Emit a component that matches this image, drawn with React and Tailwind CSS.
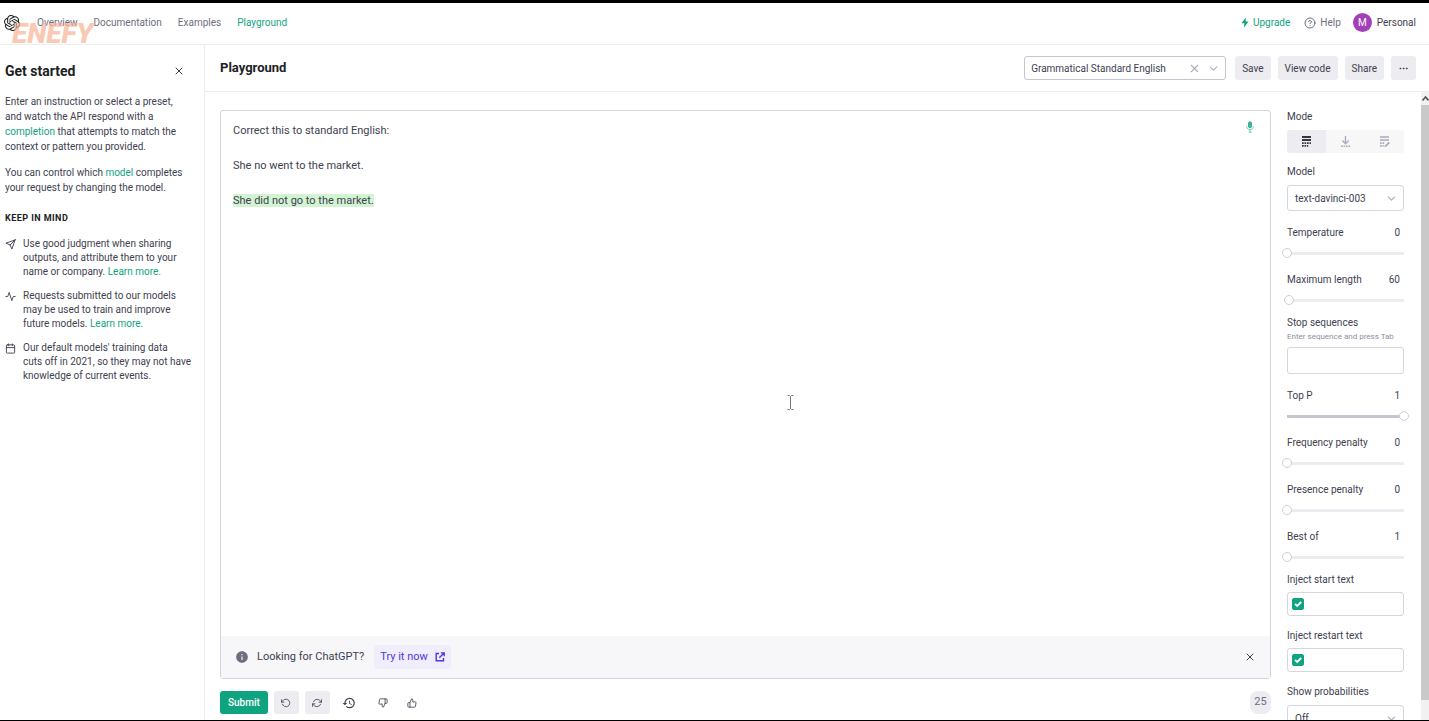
import React, { useState } from "react";
import { SiOpenai } from "react-icons/si";
import {
  FiSend, FiActivity, FiCalendar, FiX, FiChevronDown, FiHelpCircle,
  FiRotateCcw, FiRefreshCw, FiThumbsDown, FiThumbsUp, FiMoreHorizontal,
} from "react-icons/fi";
import { MdHistory, MdInfo } from "react-icons/md";

const NAV = ["Overview", "Documentation", "Examples", "Playground"];

const TIPS = [
  { icon: FiSend, text: "Use good judgment when sharing\noutputs, and attribute them to your\nname or company. ", link: true },
  { icon: FiActivity, text: "Requests submitted to our models\nmay be used to train and improve\nfuture models. ", link: true },
  { icon: FiCalendar, text: "Our default models' training data\ncuts off in 2021, so they may not have\nknowledge of current events.", link: false },
];

function CompleteIcon() {
  return (
    <svg width="13" height="13" viewBox="0 0 13 13" fill="currentColor" aria-hidden="true">
      <path d="M2 1h9v2H2zM2 4h9v2H2z" />
      <path d="M2 7.300h1.700v1.700H2zM4.500 7.300h1.700v1.700H4.500zM7 7.300h1.700v1.700H7zM9.500 7.300H11v1.700H9.500zM2 10h1.700v1.700H2zM4.500 10h1.700v1.700H4.500zM7 10h1.200v1.700H7z" />
    </svg>
  );
}

function InsertIcon() {
  return (
    <svg width="13" height="13" viewBox="0 0 13 13" fill="none" stroke="currentColor" strokeWidth="1.4" aria-hidden="true">
      <path d="M6.500 1v7.500M3.300 5.500l3.200 3.200 3.200-3.200" />
      <path d="M2 11.300h9.200" strokeDasharray="1.700 0.800" />
    </svg>
  );
}

function EditIcon() {
  return (
    <svg width="13" height="13" viewBox="0 0 13 13" fill="currentColor" aria-hidden="true">
      <path d="M2 1h9v2H2zM2 4h9v2H2z" opacity=".8" />
      <path d="M2 7.300h1.700v1.700H2zM4.500 7.300h1.700v1.700H4.500zM2 10h1.700v1.700H2zM4.500 10h1.200v1.700H4.500zM10.600 6.700l1.400 1.400-3.700 3.700-1.900.500.500-1.900z" />
    </svg>
  );
}

function Slider({ label, value, min = 0, max = 1, full }) {
  const [current, setCurrent] = useState(value);
  return (
    <div className="mb-[14px]">
      <label className="flex justify-between pr-1 leading-[14px]">
        <span>{label}</span>
        <span>{current}</span>
      </label>
      <input
        type="range"
        aria-label={label}
        min={min}
        max={max}
        step={max > 10 ? 1 : 0.01}
        value={current}
        onChange={(e) => setCurrent(e.target.value)}
        className={
          "-mx-[5px] mt-[7px] block h-3 w-[calc(100%+10px)] appearance-none bg-[length:calc(100%-10px)_3px] bg-center bg-no-repeat [&::-webkit-slider-thumb]:size-[10px] [&::-webkit-slider-thumb]:appearance-none [&::-webkit-slider-thumb]:rounded-full [&::-webkit-slider-thumb]:border [&::-webkit-slider-thumb]:border-[#cfcfda] [&::-webkit-slider-thumb]:bg-white " +
          (full ? "bg-[linear-gradient(#c5c5d2,#c5c5d2)]" : "bg-[linear-gradient(#ececf1,#ececf1)]")
        }
      />
    </div>
  );
}

function SelectField({ id, options }) {
  return (
    <div className="relative mt-[6px]">
      <select id={id} className="block h-[26px] w-full appearance-none rounded-[3px] border border-[#d5d5dd] bg-white pl-[7px] pr-6">
        {options.map((o) => <option key={o}>{o}</option>)}
      </select>
      <FiChevronDown className="pointer-events-none absolute right-[6px] top-[7px] size-[13px] text-[#acacbe]" />
    </div>
  );
}

function InjectField({ id, label }) {
  return (
    <div className="mb-[13px]">
      <label htmlFor={id} className="block leading-[14px]">{label}</label>
      <div className="mt-[5px] flex h-6 items-center rounded-[3px] border border-[#d5d5dd] px-1">
        <span className="relative flex size-3">
          <input type="checkbox" defaultChecked aria-label={"Enable " + label.toLowerCase()} className="peer size-3 appearance-none rounded-[2px] border border-[#10a37f] checked:bg-[#10a37f]" />
          <svg viewBox="0 0 12 12" className="pointer-events-none absolute inset-0 hidden size-3 peer-checked:block" fill="none" stroke="white" strokeWidth="1.8" aria-hidden="true">
            <path d="M3 5.8l2.2 2.2L9.2 4" />
          </svg>
        </span>
        <input id={id} type="text" className="ml-1 min-w-0 flex-1 outline-none" />
      </div>
    </div>
  );
}

const grayButton = "flex h-6 items-center justify-center rounded-[3px] bg-[#ececf1] px-[7px]";

export default function App() {
  return (
    <div className="flex h-screen flex-col overflow-hidden border-b border-t-[3px] border-black bg-white font-[Roboto,sans-serif] text-[10px] text-[#40414f]">
      <header className="relative flex h-[42px] shrink-0 items-center border-b border-[#ededf0] pb-[2px] pl-1 pr-[13px]">
        <SiOpenai className="size-4 text-[#202123]" />
        <nav className="ml-[17px] flex gap-4 text-[#6e6e80]">
          {NAV.map((n) => (
            <a key={n} href="#" className={n === "Playground" ? "text-[#10a37f]" : ""}>{n}</a>
          ))}
        </nav>
        <div aria-hidden="true" className="pointer-events-none absolute left-3 top-[14px] z-10 text-[28px] font-black italic leading-[34px] text-[#f9b193]/70">
          ENEFY
        </div>
        <div className="ml-auto flex items-center">
          <a href="#" className="flex items-center gap-1 text-[#10a37f]">
            <svg width="8" height="11" viewBox="0 0 8 11" fill="currentColor" aria-hidden="true">
              <path d="M4.8.4L.4 6.3h2.9l-.3 4.3 4.6-6H4.6z" />
            </svg>
            Upgrade
          </a>
          <a href="#" className="ml-[14px] flex items-center gap-1 text-[#6e6e80]">
            <FiHelpCircle className="size-3" />
            Help
          </a>
          <button type="button" className="ml-3 flex items-center gap-[5px]">
            <span className="flex size-[19px] items-center justify-center rounded-full bg-[#a33fb8] text-white">M</span>
            Personal
          </button>
        </div>
      </header>

      <div className="flex min-h-0 flex-1">
        <aside className="w-[205px] shrink-0 border-r border-[#ededf0] pl-[5px] pr-4 pt-[17px]">
          <div className="flex items-center justify-between pr-[3px]">
            <h2 className="text-[14px] font-bold leading-[18px] text-[#202123]">Get started</h2>
            <button type="button" aria-label="Close"><FiX className="size-3" /></button>
          </div>
          <p className="mt-[14px] leading-[15px]">
            Enter an instruction or select a preset,<br />and watch the API respond with a<br />
            <a href="#" className="text-[#10a37f]">completion</a> that attempts to match the<br />context or pattern you provided.
          </p>
          <p className="mt-[11px] leading-[15px]">
            You can control which <a href="#" className="text-[#10a37f]">model</a> completes<br />your request by changing the model.
          </p>
          <h3 className="mt-4 text-[9px] font-bold leading-[14px] tracking-wider text-[#202123]">KEEP IN MIND</h3>
          <ul className="mt-3 flex flex-col gap-[10px] leading-[14px]">
            {TIPS.map(({ icon: Icon, text, link }) => (
              <li key={text} className="flex gap-[7px]">
                <Icon className="mt-[2px] size-[11px] shrink-0" />
                <span className="-mr-2 whitespace-pre-line">
                  {text}
                  {link && <a href="#" className="text-[#10a37f]">Learn more.</a>}
                </span>
              </li>
            ))}
          </ul>
        </aside>

        <main className="flex min-w-0 flex-1 flex-col">
          <div className="flex h-[47px] shrink-0 items-center border-b border-[#ededf0] pl-[15px] pr-[13px]">
            <h1 className="text-[13px] font-bold text-[#202123]">Playground</h1>
            <div className="ml-auto flex items-center gap-[7px]">
              <div className="relative mr-[2px] w-[202px]">
                <select aria-label="Preset" className="block h-6 w-full appearance-none rounded-[3px] border border-[#c5c5d2] bg-white pl-[6px]">
                  <option>Grammatical Standard English</option>
                </select>
                <span className="pointer-events-none absolute right-[6px] top-[6px] flex gap-[6px] text-[#acacbe]">
                  <FiX className="size-[13px]" />
                  <FiChevronDown className="size-[13px]" />
                </span>
              </div>
              <button type="button" className={grayButton}>Save</button>
              <button type="button" className={grayButton}>View code</button>
              <button type="button" className={grayButton}>Share</button>
              <button type="button" aria-label="More" className={grayButton}><FiMoreHorizontal className="size-[11px]" /></button>
            </div>
          </div>

          <div className="flex min-h-0 flex-1">
            <section className="flex min-w-0 flex-1 flex-col pb-[6px] pl-[15px] pt-[18px]">
              <div className="relative flex min-h-0 flex-1 flex-col rounded-[3px] border border-[#d5d5e0]">
                <div
                  role="textbox"
                  aria-label="Prompt"
                  aria-multiline="true"
                  contentEditable
                  suppressContentEditableWarning
                  className="flex flex-1 flex-col gap-[18px] px-3 pt-[11px] text-[11px] leading-[17px] outline-none"
                >
                  <p>Correct this to standard English:</p>
                  <p>She no went to the market.</p>
                  <p><span className="bg-[#d2f4d3]">She did not go to the market.</span></p>
                </div>
                <button type="button" aria-label="Dictate" className="absolute right-4 top-[10px] text-[#10a37f]/80">
                  <svg width="8" height="12" viewBox="0 0 8 12" fill="none" stroke="currentColor" aria-hidden="true">
                    <rect x="2.5" y=".8" width="3" height="6" rx="1.5" fill="currentColor" />
                    <path d="M.7 5.2c0 4.6 6.600 4.600 6.600 0M4 8.700v2.300M2.500 11.200h3" opacity=".7" />
                  </svg>
                </button>
                <svg className="pointer-events-none absolute left-[54%] top-1/2 h-[15px] w-[7px]" viewBox="0 0 7 15" fill="none" stroke="#777" aria-hidden="true">
                  <path d="M.5 .5h2l1 1 1-1h2M3.500 1.500v12M.5 14.500h2l1-1 1 1h2" />
                </svg>
                <div className="flex h-[42px] shrink-0 items-center bg-[#f7f7fa] px-[14px] text-[11px]">
                  <MdInfo className="size-[14px] text-[#6e6e80]" />
                  <span className="ml-2">Looking for ChatGPT?</span>
                  <a href="#" className="ml-[10px] flex h-6 items-center gap-[7px] rounded-[3px] bg-[#f0edfd] px-[6px] text-[#5436da]">
                    Try it now
                    <svg width="10" height="10" viewBox="0 0 10 10" fill="none" stroke="currentColor" strokeWidth="1.400" aria-hidden="true">
                      <path d="M4 1.500H1.200v7.300h7.300V6M5.800.9h3.400v3.400M9 1L4.300 5.700" />
                    </svg>
                  </a>
                  <button type="button" aria-label="Dismiss" className="ml-auto"><FiX className="size-3" /></button>
                </div>
              </div>
              <div className="mt-3 flex h-[23px] shrink-0 items-center">
                <button type="button" className="h-full rounded-[3px] bg-[#10a37f] px-2 font-medium text-white">Submit</button>
                <button type="button" aria-label="Undo" className="ml-[6px] flex h-full w-[25px] items-center justify-center rounded-[3px] bg-[#ececf1]"><FiRotateCcw className="size-[10px]" /></button>
                <button type="button" aria-label="Regenerate" className="ml-[6px] flex h-full w-[25px] items-center justify-center rounded-[3px] bg-[#ececf1]"><FiRefreshCw className="size-[10px]" /></button>
                <button type="button" aria-label="History" className="ml-3"><MdHistory className="size-[14px]" /></button>
                <button type="button" aria-label="Thumbs down" className="ml-[22px]"><FiThumbsDown className="size-[10px]" /></button>
                <button type="button" aria-label="Thumbs up" className="ml-[19px]"><FiThumbsUp className="size-[10px]" /></button>
                <span className="ml-auto flex h-full w-[21px] items-center justify-center rounded-[8px] bg-[#ececf1] text-[11px] text-[#6e6e80]">25</span>
              </div>
            </section>

            <aside className="w-[150px] shrink-0 overflow-hidden pl-4 pr-[17px] pt-[18px]">
              <div className="leading-[14px]">Mode</div>
              <div className="mt-[6px] grid h-[23px] grid-cols-3 overflow-hidden rounded-[3px] bg-[#f7f7f8] text-[#acacbe]">
                <button type="button" aria-label="Complete" className="flex items-center justify-center bg-[#ececf1] text-[#353740]"><CompleteIcon /></button>
                <button type="button" aria-label="Insert" className="flex items-center justify-center"><InsertIcon /></button>
                <button type="button" aria-label="Edit" className="flex items-center justify-center"><EditIcon /></button>
              </div>
              <label htmlFor="model" className="mt-3 block leading-[14px]">Model</label>
              <SelectField id="model" options={["text-davinci-003"]} />
              <div className="mt-[15px]">
                <Slider label="Temperature" value={0} />
                <Slider label="Maximum length" value={60} min={1} max={4000} />
              </div>
              <label htmlFor="stop" className="-mt-1 block leading-[14px]">Stop sequences</label>
              <div className="mt-px whitespace-nowrap text-[8px] leading-3 text-[#8e8ea0]">Enter sequence and press Tab</div>
              <input id="stop" type="text" className="mb-[15px] mt-1 block h-[27px] w-full rounded-[3px] border border-[#d5d5dd] px-2" />
              <Slider label="Top P" value={1} full />
              <Slider label="Frequency penalty" value={0} max={2} />
              <Slider label="Presence penalty" value={0} max={2} />
              <Slider label="Best of" value={1} min={1} max={20} />
              <div className="-mt-1">
                <InjectField id="start" label="Inject start text" />
                <InjectField id="restart" label="Inject restart text" />
              </div>
              <label htmlFor="prob" className="block leading-[14px]">Show probabilities</label>
              <SelectField id="prob" options={["Off", "Most likely", "Least likely", "Full spectrum"]} />
            </aside>

            <div aria-hidden="true" className="flex w-2 shrink-0 flex-col bg-[#f1f1f1]">
              <svg width="8" height="13" viewBox="0 0 8 13" fill="none" stroke="#505050" strokeWidth="1.600">
                <path d="M1.500 8.500L4.500 5l3 3.500" />
              </svg>
              <div className="mb-5 flex-1 bg-[#c9c9c9]" />
            </div>
          </div>
        </main>
      </div>
    </div>
  );
}
